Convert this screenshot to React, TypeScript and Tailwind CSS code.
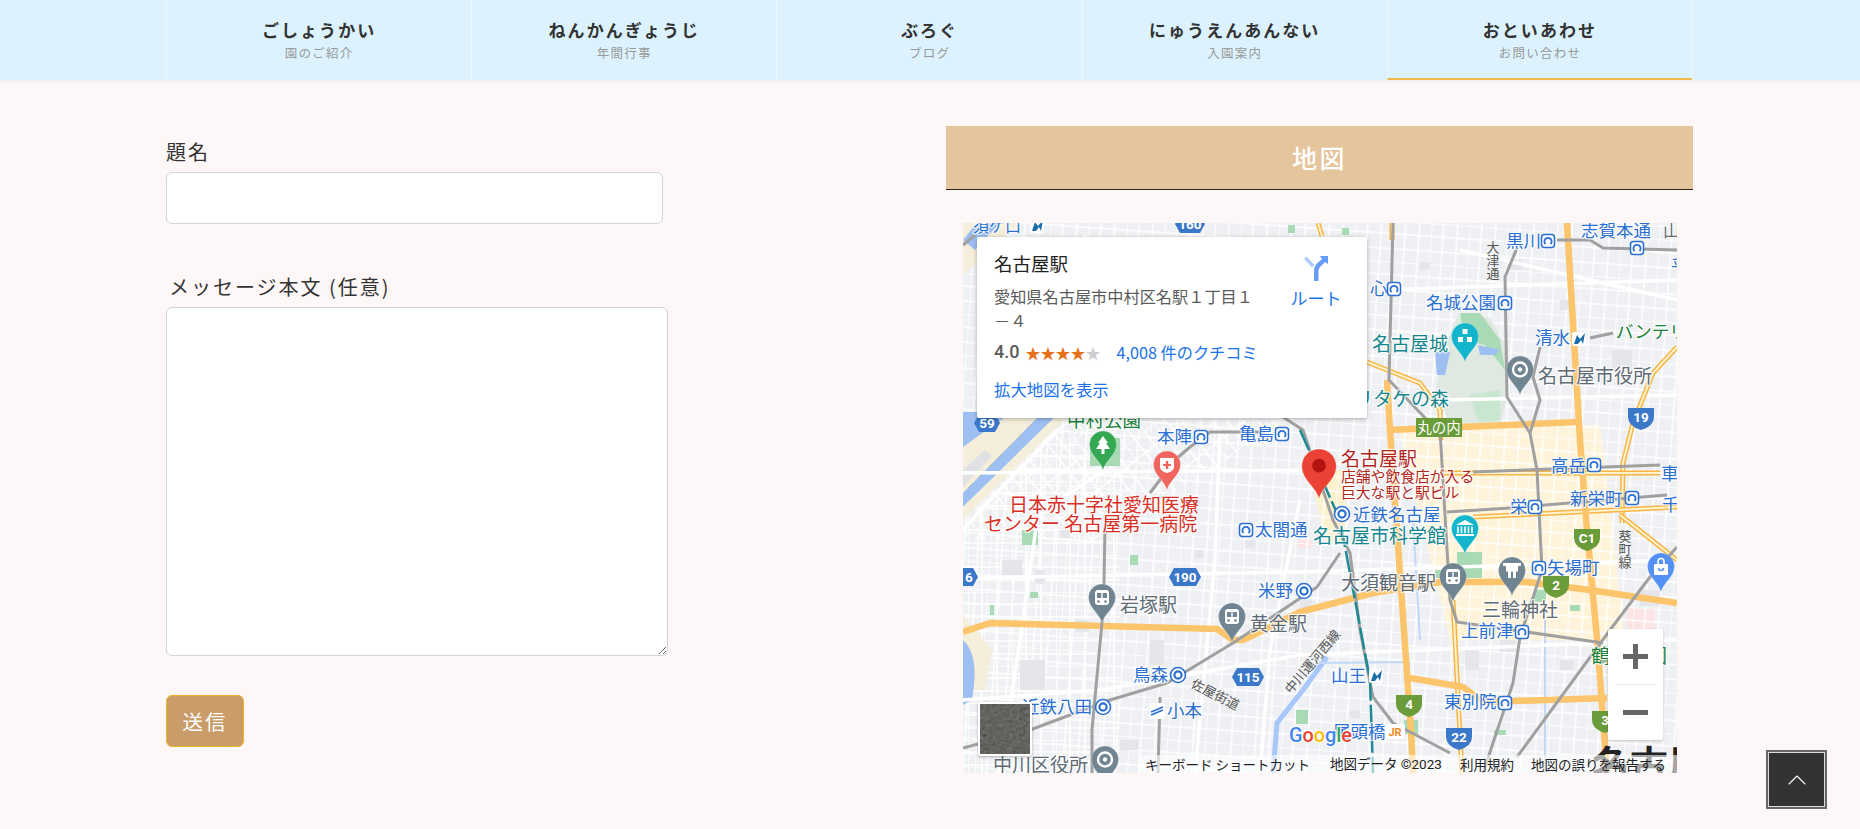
import { ChevronUp } from "lucide-react";
import type { ReactNode } from "react";

const navItems = [
  { title: "ごしょうかい", sub: "園のご紹介" },
  { title: "ねんかんぎょうじ", sub: "年間行事" },
  { title: "ぶろぐ", sub: "ブログ" },
  { title: "にゅうえんあんない", sub: "入園案内" },
  { title: "おといあわせ", sub: "お問い合わせ", active: true },
];

const BLUE = "#2a6fd2";
const TEAL = "#14868f";
const GRAY = "#5f6b75";
const RED = "#d93025";
const DARKRED = "#b3261e";
const GREEN = "#188038";

// text, left x, baseline y, size, colour
const labels: [string, number, number, number, string][] = [
  ["須ケ口", 973, 232, 16, BLUE],
  ["中村公園", 1067, 427, 18.5, GREEN],
  ["本陣", 1157, 443, 17.5, BLUE],
  ["亀島", 1239, 440, 17.5, BLUE],
  ["日本赤十字社愛知医療", 1009, 512, 19, RED],
  ["センター 名古屋第一病院", 984, 531, 19, RED],
  ["名古屋駅", 1341, 466, 19, DARKRED],
  ["店舗や飲食店が入る", 1341, 482, 14.8, DARKRED],
  ["巨大な駅と駅ビル", 1341, 498, 14.8, DARKRED],
  ["近鉄名古屋", 1353, 521, 17.5, BLUE],
  ["名古屋市科学館", 1313, 543, 19, TEAL],
  ["太閤通", 1255, 536, 17.5, BLUE],
  ["大須観音駅", 1341, 590, 19, GRAY],
  ["米野", 1258, 597, 17.5, BLUE],
  ["岩塚駅", 1120, 612, 19, GRAY],
  ["黄金駅", 1250, 631, 19, GRAY],
  ["鳥森", 1133, 681, 17.5, BLUE],
  ["山王", 1331, 682, 17.5, BLUE],
  ["近鉄八田", 1022, 713, 17.5, BLUE],
  ["小本", 1167, 717, 17.5, BLUE],
  ["尾頭橋", 1333, 738, 17.5, BLUE],
  ["中川区役所", 993, 772, 19, GRAY],
  ["黒川", 1506, 247, 17.5, BLUE],
  ["志賀本通", 1581, 237, 17.5, BLUE],
  ["山", 1663, 237, 17, GRAY],
  ["平", 1671, 272, 17, BLUE],
  ["心", 1370, 295, 17.5, BLUE],
  ["名城公園", 1426, 309, 17.5, BLUE],
  ["名古屋城", 1372, 351, 19, TEAL],
  ["清水", 1535, 344, 17.5, BLUE],
  ["バンテリンドーム", 1616, 338, 17.5, GREEN],
  ["名古屋市役所", 1538, 383, 19, GRAY],
  ["ノリタケの森", 1335, 406, 19, TEAL],
  ["高岳", 1551, 472, 17.5, BLUE],
  ["車", 1661, 480, 17.5, BLUE],
  ["新栄町", 1570, 505, 17.5, BLUE],
  ["千", 1662, 511, 17.5, BLUE],
  ["栄", 1510, 513, 17.5, BLUE],
  ["矢場町", 1547, 574, 17.5, BLUE],
  ["三輪神社", 1482, 617, 19, GRAY],
  ["上前津", 1461, 637, 17.5, BLUE],
  ["鶴舞公園", 1591, 663, 19, GREEN],
  ["東別院", 1444, 708, 17.5, BLUE],
];

const stations: [string, number, number][] = [
  ["sub", 1201, 437], ["sub", 1282, 434], ["ring", 1342, 514], ["sub", 1246, 530],
  ["ring", 1304, 591], ["ring", 1178, 675], ["mei", 1376, 676], ["ring", 1103, 707],
  ["wave", 1157, 711], ["sub", 1548, 241], ["sub", 1637, 248], ["sub", 1394, 289],
  ["sub", 1505, 303], ["mei", 1579, 339], ["sub", 1594, 465], ["sub", 1632, 498],
  ["sub", 1535, 507], ["sub", 1539, 568], ["sub", 1522, 632], ["sub", 1505, 703],
  ["mei", 1037, 226],
];

const orangeRoads = [
  "963,632 990,623 1217,629 1233,640 1243,640 1300,612 1373,593",
  "1373,593 1440,582 1527,582 1590,590 1677,603",
  "1387,380 1390,430 1403,617 1411,730 1413,773",
  "1387,430 1577,422",
  "1567,223 1580,440 1587,530 1598,650 1607,773",
  "1410,678 1463,687 1483,702 1607,698",
];

const thinOrange = [
  "1367,362 1420,383 1440,410 1441,440",
  "1677,347 1653,373 1633,423 1623,463 1622,523",
  "1440,473 1660,473",
  "1473,517 1677,507",
  "1453,600 1462,773",
  "1318,223 1322,236",
  "1392,223 1392,240",
  "1620,515 1677,560",
];

const rails = [
  "1105,527 1104,584 1102,622 1092,730 1092,773",
  "963,748 1030,730 1110,700 1167,683 1233,643 1317,587 1340,553",
  "1283,417 1303,430 1333,520 1350,553 1360,630 1373,697 1393,723 1450,753",
  "1393,223 1389,380 1427,420 1440,430 1450,600 1457,622 1603,643",
  "1517,248 1505,277 1507,397 1530,433 1537,470 1542,570 1520,637 1513,683 1483,773",
  "1540,347 1533,377 1540,400 1530,433",
  "1557,240 1590,240 1603,248 1677,250",
  "1590,338 1613,333",
  "1473,472 1660,465",
  "1447,512 1510,508 1667,495",
  "1677,547 1650,577 1610,630 1517,757",
  "1150,493 1175,460 1190,447 1210,432 1265,432",
  "963,245 975,235",
  "1160,697 1158,773",
];

const whiteRoads = [
  "1058,430 985,505 963,530",
  "963,578 1300,572 1680,560",
  "963,473 1330,470",
  "963,700 1100,690 1300,655 1677,640",
  "1220,430 1215,560 1195,773",
  "1040,500 1020,640 1000,773",
  "1300,500 1270,650 1260,773",
  "1440,400 1677,395",
  "1460,250 1677,300",
  "1380,290 1677,280",
  "1100,380 1085,235",
  "1030,520 1100,473",
];

const greenBlocks: [number, number, number, number][] = [
  [1022, 530, 16, 15], [1130, 555, 8, 10], [1030, 592, 8, 6], [990, 605, 4, 10], [1288, 225, 7, 8],
  [1342, 228, 7, 7], [1457, 552, 25, 26], [1534, 590, 12, 12], [1570, 605, 10, 6], [1404, 720, 14, 14],
  [1296, 710, 12, 14], [1494, 730, 12, 5], [1435, 570, 8, 8],
];

const grayBlocks: [number, number, number, number][] = [
  [1002, 560, 20, 15], [1035, 570, 10, 14], [1075, 620, 14, 12], [1150, 640, 14, 25], [1020, 660, 25, 30],
  [1245, 540, 10, 8], [1300, 600, 12, 8], [1060, 530, 10, 8], [1195, 550, 8, 8], [1510, 260, 12, 10],
  [1420, 262, 10, 8], [1612, 350, 20, 20], [1560, 300, 15, 10], [1640, 590, 20, 16], [1500, 640, 16, 12],
  [1560, 660, 14, 10], [1465, 650, 14, 20], [1350, 710, 10, 8], [1625, 640, 25, 20], [1120, 740, 18, 10],
];

function Pin({ x, y, color, s = 1, children }: { x: number; y: number; color: string; s?: number; children?: ReactNode }) {
  return (
    <g transform={`translate(${x} ${y}) scale(${s})`}>
      <path d="M0 39C-2 30-13.5 24-13.5 13.5A13.5 13.5 0 1 1 13.5 13.5C13.5 24 2 30 0 39Z" fill={color} stroke="#fff" strokeOpacity="0.5" strokeWidth="0.5" />
      {children}
    </g>
  );
}

function Train({ color }: { color: string }) {
  return (
    <g>
      <rect x="-7" y="6" width="14" height="15" rx="3" fill="#fff" />
      <rect x="-5" y="9" width="4.3" height="5" fill={color} />
      <rect x="0.7" y="9" width="4.3" height="5" fill={color} />
      <circle cx="-3.5" cy="17.5" r="1.3" fill={color} />
      <circle cx="3.5" cy="17.5" r="1.3" fill={color} />
    </g>
  );
}

function Target() {
  return (
    <g fill="none" stroke="#fff">
      <circle cx="0" cy="13.5" r="7" strokeWidth="2.4" />
      <circle cx="0" cy="13.5" r="1.8" fill="#fff" strokeWidth="1" />
    </g>
  );
}

function Station({ type, x, y }: { type: string; x: number; y: number }) {
  if (type === "ring") {
    return (
      <g>
        <circle cx={x} cy={y} r="7.5" fill="#fff" stroke={BLUE} strokeWidth="1.6" />
        <circle cx={x} cy={y} r="3.6" fill="none" stroke={BLUE} strokeWidth="2.2" />
      </g>
    );
  }
  if (type === "mei") {
    return (
      <g>
        <rect x={x - 7} y={y - 7} width="14" height="14" rx="2" fill="#fff" />
        <path d={`M${x - 5} ${y + 5}L${x - 2} ${y - 4}L${x + 1} ${y}L${x + 6} ${y - 6}L${x + 4} ${y + 5}L${x + 2} ${y + 1}L${x - 1} ${y + 5}Z`} fill="#1a6fa8" />
      </g>
    );
  }
  if (type === "wave") {
    return (
      <g fill="none" stroke={BLUE} strokeWidth="1.6">
        <rect x={x - 8} y={y - 8} width="16" height="16" rx="3" fill="#fff" stroke="none" />
        <path d={`M${x - 6} ${y + 1}L${x + 6} ${y - 4}M${x - 6} ${y + 4}L${x + 6} ${y - 1}`} />
      </g>
    );
  }
  return (
    <g>
      <rect x={x - 6.5} y={y - 6.5} width="13" height="13" rx="3" fill="#fff" stroke={BLUE} strokeWidth="1.5" />
      <path d={`M${x - 2.5} ${y + 3}A3.6 3.6 0 1 1 ${x + 2.5} ${y + 3}`} fill="none" stroke={BLUE} strokeWidth="1.8" />
    </g>
  );
}

function Hex({ x, y, w, text }: { x: number; y: number; w: number; text: string }) {
  const h = w / 2;
  return (
    <g>
      <polygon points={`${x - h + 5},${y - 9} ${x + h - 5},${y - 9} ${x + h},${y} ${x + h - 5},${y + 9} ${x - h + 5},${y + 9} ${x - h},${y}`} fill="#3b78c9" />
      <text x={x} y={y + 5} textAnchor="middle" fontSize="13.5" fontWeight="700" fill="#fff" className="font-['Roboto']">{text}</text>
    </g>
  );
}

function Shield({ x, y, text, color }: { x: number; y: number; text: string; color: string }) {
  return (
    <g>
      <path d={`M${x - 13} ${y - 9}H${x + 13}V${y}Q${x + 13} ${y + 9} ${x} ${y + 13}Q${x - 13} ${y + 9} ${x - 13} ${y}Z`} fill={color} />
      <text x={x} y={y + 5} textAnchor="middle" fontSize="13.5" fontWeight="700" fill="#fff" className="font-['Roboto']">{text}</text>
    </g>
  );
}

function RoadMap() {
  return (
    <svg viewBox="963 223 714 550" className="absolute inset-0 h-full w-full">
      <defs>
        <pattern id="streets" width="44" height="37" patternUnits="userSpaceOnUse">
          <path d="M0 0V37M14 0V37M29 0V37M0 0H44M0 12H44M0 25H44" stroke="#fff" strokeWidth="1.6" />
        </pattern>
        <pattern id="streetsB" width="38" height="41" patternUnits="userSpaceOnUse" patternTransform="rotate(4)">
          <path d="M0 0V41M12 0V41M26 0V41M0 0H38M0 13H38M0 28H38" stroke="#fff" strokeWidth="1.5" />
        </pattern>
        <pattern id="streetsC" width="36" height="36" patternUnits="userSpaceOnUse" patternTransform="rotate(-38)">
          <path d="M0 0V36M12 0V36M24 0V36M0 0H36M0 18H36" stroke="#fff" strokeWidth="1.6" />
        </pattern>
        <filter id="speck">
          <feTurbulence type="fractalNoise" baseFrequency="0.3" numOctaves="3" />
          <feColorMatrix values="0.08 0.08 0.08 0 0 0.085 0.085 0.085 0 0 0.075 0.075 0.075 0 0 0 0 0 0 1" />
        </filter>
      </defs>

      <rect x="963" y="223" width="714" height="550" fill="#eef0f3" />

      {/* downtown tint and pink blocks */}
      <polygon points="1400,432 1600,425 1625,640 1450,640" fill="#fff4d9" />
      <polygon points="1310,470 1345,470 1345,545 1325,540" fill="#fdf0cc" />
      <rect x="1627" y="608" width="28" height="24" fill="#fbe4e3" />
      <rect x="1298" y="540" width="14" height="8" fill="#fbe4e3" />

      <rect x="963" y="223" width="714" height="550" fill="url(#streetsB)" />
      <polygon points="1060,430 963,530 963,773 1120,773 1120,470" fill="url(#streets)" />
      <polygon points="963,420 1290,420 1100,540 963,540" fill="url(#streetsC)" />

      {grayBlocks.map(([x, y, w, h], i) => (
        <rect key={i} x={x} y={y} width={w} height={h} fill="#e4e6e9" />
      ))}

      {/* river and banks */}
      <polygon points="963,223 1020,223 963,275" fill="#f4eedb" />
      <polygon points="963,412 1045,412 963,497" fill="#f4eedb" />
      <polygon points="963,470 985,450 992,456 963,487" fill="#dfe1e5" />
      <polygon points="963,412 1012,412 963,447" fill="#9dbff2" />
      <polygon points="1043,412 1060,412 963,507 963,493" fill="#9dbff2" />
      <polygon points="1060,412 1072,412 963,520 963,507" fill="#f4eedb" />
      <path d="M968 488L1034 422" stroke="#b5b5aa" strokeWidth="1" strokeDasharray="7 7" />
      <polygon points="963,615 992,650 985,690 963,690" fill="#f4eedb" />

      {/* water */}
      <path d="M963 640Q980 655 972 700L963 705Z" fill="#9dbff2" />
      <path d="M1327 657L1303 690L1277 723L1273 773" fill="none" stroke="#a8c7fa" strokeWidth="5" />
      <path d="M1320 663L1410 662" fill="none" stroke="#c3d7f7" strokeWidth="2" />
      <path d="M1545 620V773" fill="none" stroke="#c3d7f7" strokeWidth="2" />
      <path d="M1413 520L1420 640" fill="none" stroke="#c3d7f7" strokeWidth="2" />
      <polygon points="963,240 975,225 1000,223 975,250" fill="#9dbff2" />

      {/* parks */}
      <polygon points="1458,315 1490,318 1505,345 1508,395 1500,425 1450,425 1436,390 1445,345" fill="#dfe9e2" />
      <polygon points="1460,313 1480,313 1500,340 1505,370 1485,345 1465,340" fill="#a8dab5" />
      <polygon points="1470,395 1500,390 1500,420 1478,422" fill="#c8e6d0" />
      <polygon points="1435,352 1450,352 1445,375 1437,375" fill="#9dbff2" />
      <polygon points="1478,345 1500,350 1495,355 1480,355" fill="#9dbff2" />
      <rect x="1090" y="438" width="30" height="28" fill="#a8dab5" />

      {greenBlocks.map(([x, y, w, h], i) => (
        <rect key={i} x={x} y={y} width={w} height={h} fill="#a8dab5" />
      ))}

      {whiteRoads.map((p, i) => (
        <polyline key={i} points={p} fill="none" stroke="#fff" strokeWidth="3.5" />
      ))}

      {thinOrange.map((p, i) => (
        <g key={i}>
          <polyline points={p} fill="none" stroke="#f8b544" strokeWidth="5" />
          <polyline points={p} fill="none" stroke="#fff3cf" strokeWidth="2" />
        </g>
      ))}
      {orangeRoads.map((p, i) => (
        <polyline key={i} points={p} fill="none" stroke="#fcc46b" strokeWidth="6.5" strokeLinejoin="round" />
      ))}

      {rails.map((p, i) => (
        <polyline key={i} points={p} fill="none" stroke="#a0a0a0" strokeWidth="3" strokeLinejoin="round" />
      ))}
      <polyline points="1300,430 1340,520 1355,600 1370,680 1373,773" fill="none" stroke="#1f8a94" strokeWidth="2.5" strokeDasharray="22 4" />

      {labels.map(([t, x, y, size, color]) => (
        <text key={t + x} x={x} y={y} fontSize={size} fill={color} stroke="#fff" strokeWidth="2.5" strokeOpacity="0.75" strokeLinejoin="round" className="[paint-order:stroke]">
          {t}
        </text>
      ))}

      <text x="1493" y="241" fontSize="13" fill="#555" writingMode="vertical-rl">大津通</text>
      <text x="1625" y="530" fontSize="13" fill="#555" writingMode="vertical-rl">葵町線</text>
      <text x="1215" y="699" fontSize="13" fill="#555" textAnchor="middle" transform="rotate(27 1215 695)">佐屋街道</text>
      <text x="1313" y="666" fontSize="13" fill="#555" textAnchor="middle" transform="rotate(-50 1313 662)">中川運河西線</text>
      <text x="1592" y="778" fontSize="38" fontWeight="700" fill="#222">名古屋</text>

      {stations.map(([type, x, y], i) => (
        <Station key={i} type={type} x={x} y={y} />
      ))}

      <rect x="1385" y="724" width="20" height="15" rx="2" fill="#fff" />
      <text x="1395" y="736" textAnchor="middle" fontSize="11" fontWeight="700" fill="#f08a1c" className="font-['Roboto']">JR</text>

      <rect x="1416" y="418" width="46" height="19" fill="#6a9c3a" />
      <text x="1439" y="433" textAnchor="middle" fontSize="14.5" fill="#fff">丸の内</text>

      <Hex x={987} y={423} w={26} text="59" />
      <Hex x={1185} y={577} w={32} text="190" />
      <Hex x={965} y={577} w={26} text="16" />
      <Hex x={1248} y={677} w={32} text="115" />
      <Hex x={1190} y={224} w={30} text="160" />
      <Shield x={1587} y={538} text="C1" color="#6a9c3a" />
      <Shield x={1556} y={585} text="2" color="#6a9c3a" />
      <Shield x={1409} y={704} text="4" color="#6a9c3a" />
      <Shield x={1605} y={720} text="3" color="#6a9c3a" />
      <Shield x={1459} y={737} text="22" color="#3b78c9" />
      <Shield x={1641} y={417} text="19" color="#3b78c9" />

      <Pin x={1103} y={431} color="#34a853">
        <polygon points="0,5 5,12 3,12 7,18 1.5,18 1.5,23 -1.5,23 -1.5,18 -7,18 -3,12 -5,12" fill="#fff" />
      </Pin>
      <Pin x={1167} y={451} color="#f0655e">
        <path d="M-7 7H7V16Q7 20 0 22Q-7 20-7 16Z" fill="#fff" />
        <path d="M-1.2 10H1.2V13H4V15H1.2V18H-1.2V15H-4V13H-1.2Z" fill="#f0655e" />
      </Pin>
      <Pin x={1465} y={323} color="#12b5cb">
        <rect x="-2.5" y="6" width="5" height="5" fill="#fff" />
        <rect x="-7" y="14" width="5" height="5" fill="#fff" />
        <rect x="2" y="14" width="5" height="5" fill="#fff" />
      </Pin>
      <Pin x={1465} y={515} color="#12b5cb">
        <polygon points="0,5 9,10 -9,10" fill="#fff" />
        <path d="M-7 11.5V18M-3.5 11.5V18M0 11.5V18M3.5 11.5V18M7 11.5V18" stroke="#fff" strokeWidth="1.6" />
        <rect x="-9" y="19" width="18" height="2" fill="#fff" />
      </Pin>
      <Pin x={1520} y={356} color="#708492"><Target /></Pin>
      <Pin x={1105} y={746} color="#708492"><Target /></Pin>
      <Pin x={1102} y={584} color="#708492"><Train color="#708492" /></Pin>
      <Pin x={1232} y={603} color="#708492"><Train color="#708492" /></Pin>
      <Pin x={1453} y={563} color="#708492"><Train color="#708492" /></Pin>
      <Pin x={1512} y={557} color="#708492">
        <path d="M-9 6H9V9H6V12H4V21H1V14.5H-1V21H-4V12H-6V9H-9Z" fill="#fff" />
        <rect x="-6" y="12" width="12" height="2.5" fill="#fff" />
      </Pin>
      <Pin x={1661} y={553} color="#5491f5">
        <rect x="-7" y="11" width="14" height="11" rx="1" fill="#fff" />
        <path d="M-3 11V8.5A3 3 0 0 1 3 8.5V11" fill="none" stroke="#fff" strokeWidth="1.6" />
        <path d="M-2.5 15A2.5 2.5 0 0 0 2.5 15" fill="none" stroke="#5491f5" strokeWidth="1.5" />
      </Pin>

      <Pin x={1319} y={449} s={1.28} color="#ea4335">
        <circle cx="0" cy="13" r="5.3" fill="#b31412" />
      </Pin>

      <text x="1289" y="742" fontSize="21" fontWeight="500" textLength="63" lengthAdjust="spacingAndGlyphs" stroke="#fff" strokeWidth="2.5" strokeOpacity="0.85" className="font-['Roboto'] [paint-order:stroke]">
        <tspan fill="#4285f4">G</tspan>
        <tspan fill="#ea4335">o</tspan>
        <tspan fill="#fbbc05">o</tspan>
        <tspan fill="#4285f4">g</tspan>
        <tspan fill="#34a853">l</tspan>
        <tspan fill="#ea4335">e</tspan>
      </text>
    </svg>
  );
}

function Stars() {
  return (
    <span className="text-[15px] leading-none tracking-normal text-[#e7711b]">
      ★★★★<span className="text-[#ccc]">★</span>
    </span>
  );
}

function InfoCard() {
  return (
    <div className="absolute left-[14px] top-[14px] flex h-[181px] w-[390px] rounded-[2px] bg-white pl-[17px] pt-[13px] shadow-[0_1px_4px_rgba(0,0,0,0.3)]">
      <div className="w-[272px]">
        <div className="text-[18.5px] leading-[27px] text-[#222]">名古屋駅</div>
        <div className="mt-[7px] text-[16.2px] leading-[24px] text-[#5b5b5b]">愛知県名古屋市中村区名駅１丁目１－４</div>
        <div className="mt-[8px] flex items-center">
          <span className="mr-[6px] font-['Roboto'] text-[18px] font-medium leading-[24px] text-[#5b5b5b]">4.0</span>
          <Stars />
          <span className="ml-[16px] text-[16.2px] leading-[24px] text-[#1a73e8]">4,008 件のクチコミ</span>
        </div>
        <div className="mt-[13px] text-[16.4px] leading-[24px] text-[#1a73e8]">拡大地図を表示</div>
      </div>
      <div className="ml-[25px] flex w-[50px] flex-col items-center pt-[6px]">
        <svg viewBox="0 0 24 25" className="h-[25px] w-[24px]">
          <path d="M2.5 0.5L0 3L8 11.5L10.5 9Z" fill="#aecbfa" />
          <path d="M10 25V15Q10 10.5 13 7.5L18 3L16 0H24V8L21 6L16.5 10.5Q14.5 12.5 14.5 15V25Z" fill="#669df6" />
        </svg>
        <span className="mt-[5px] text-[17px] leading-[24px] whitespace-nowrap text-[#1a73e8]">ルート</span>
      </div>
    </div>
  );
}

function ZoomControl() {
  return (
    <div className="absolute left-[645px] top-[406px] flex h-[111px] w-[55px] flex-col items-center rounded-[2px] bg-white shadow-[0_1px_3px_rgba(0,0,0,0.2)]">
      <div className="flex h-[55px] w-full items-center justify-center">
        <div className="relative h-[25px] w-[25px]">
          <div className="absolute left-0 top-[10px] h-[5px] w-[25px] bg-[#666]" />
          <div className="absolute left-[10px] top-0 h-[25px] w-[5px] bg-[#666]" />
        </div>
      </div>
      <div className="h-px w-[41px] bg-[#e6e6e6]" />
      <div className="flex h-[55px] w-full items-center justify-center">
        <div className="h-[5px] w-[25px] bg-[#666]" />
      </div>
    </div>
  );
}

function Thumbnail() {
  return (
    <div className="absolute left-[15px] top-[479px] h-[54px] w-[54px] overflow-hidden rounded-[2px] border-2 border-white bg-[#62655f] shadow-[0_1px_3px_rgba(0,0,0,0.3)]">
      <svg className="h-full w-full">
        <rect width="100%" height="100%" filter="url(#speck)" />
      </svg>
    </div>
  );
}

function Attribution() {
  return (
    <div className="absolute bottom-0 right-0 flex h-[18px] w-[539px] items-center gap-[17px] bg-white/60 pl-[7px] text-[13.5px] leading-[18px] whitespace-nowrap text-[#222]">
      <span className="w-[168px]">キーボード ショートカット</span>
      <span className="w-[113px] font-['Roboto','Noto_Sans_CJK_JP']">地図データ ©2023</span>
      <span className="w-[54px]">利用規約</span>
      <span>地図の誤りを報告する</span>
    </div>
  );
}

function ContactForm() {
  return (
    <form className="w-[502px] pt-[57px] text-[20px] tracking-[0.1em] text-[#333]">
      <label className="block leading-[30px]">題名</label>
      <input type="text" className="mt-[5px] block h-[52px] w-[497px] rounded-[6px] border border-[#ced4da] bg-white" />
      <label className="mt-[48px] block pl-[3px] leading-[30px]">メッセージ本文 (任意)</label>
      <textarea className="mt-[5px] block h-[349px] w-[502px] rounded-[6px] border border-[#ced4da] bg-white" />
      <button type="button" className="mt-[39px] block h-[52px] w-[78px] rounded-[6px] border border-[#f0b429] bg-[#c99c69] text-[20.5px] text-white">送信</button>
    </form>
  );
}

export default function App() {
  return (
    <div className="relative h-[829px] overflow-hidden bg-[#fdf7f7] font-['Noto_Sans_CJK_JP',sans-serif]">
      <nav className="h-20 bg-[#dcf3ff] shadow-[0_1px_4px_rgba(0,0,0,0.08)]">
        <ul className="ml-[166px] flex h-full w-[1527px] border-r border-[#eaf7ff]">
          {navItems.map((item) => (
            <li key={item.title} className={item.active ? "flex flex-1 flex-col items-center border-b-2 border-l border-b-[#f0b84a] border-l-[#eaf7ff] pt-[18px]" : "flex flex-1 flex-col items-center border-l border-[#eaf7ff] pt-[18px]"}>
              <span className="text-[17px] font-bold leading-[24px] tracking-[0.12em] text-[#333]">{item.title}</span>
              <span className="mt-[1px] text-[12.5px] leading-[20px] tracking-[0.1em] text-[#999]">{item.sub}</span>
            </li>
          ))}
        </ul>
      </nav>

      <main className="ml-[166px] flex w-[1527px] gap-[278px]">
        <ContactForm />
        <section className="w-[747px] pt-[46px]">
          <h2 className="flex h-16 items-center justify-center border-b border-[#2e231a] bg-[#e4c59c] text-[25px] font-medium tracking-[0.1em] text-white">地図</h2>
          <div className="relative ml-[17px] mt-[33px] h-[550px] w-[714px] overflow-hidden">
            <RoadMap />
            <InfoCard />
            <Thumbnail />
            <ZoomControl />
            <Attribution />
          </div>
        </section>
      </main>

      <a className="absolute bottom-[20px] right-[33px] flex h-[59px] w-[61px] items-center justify-center border-2 border-[#666] bg-[#333] shadow-[inset_0_0_0_1px_#ddd]">
        <ChevronUp className="h-8 w-8 text-white" strokeWidth={0.8} />
      </a>
    </div>
  );
}
